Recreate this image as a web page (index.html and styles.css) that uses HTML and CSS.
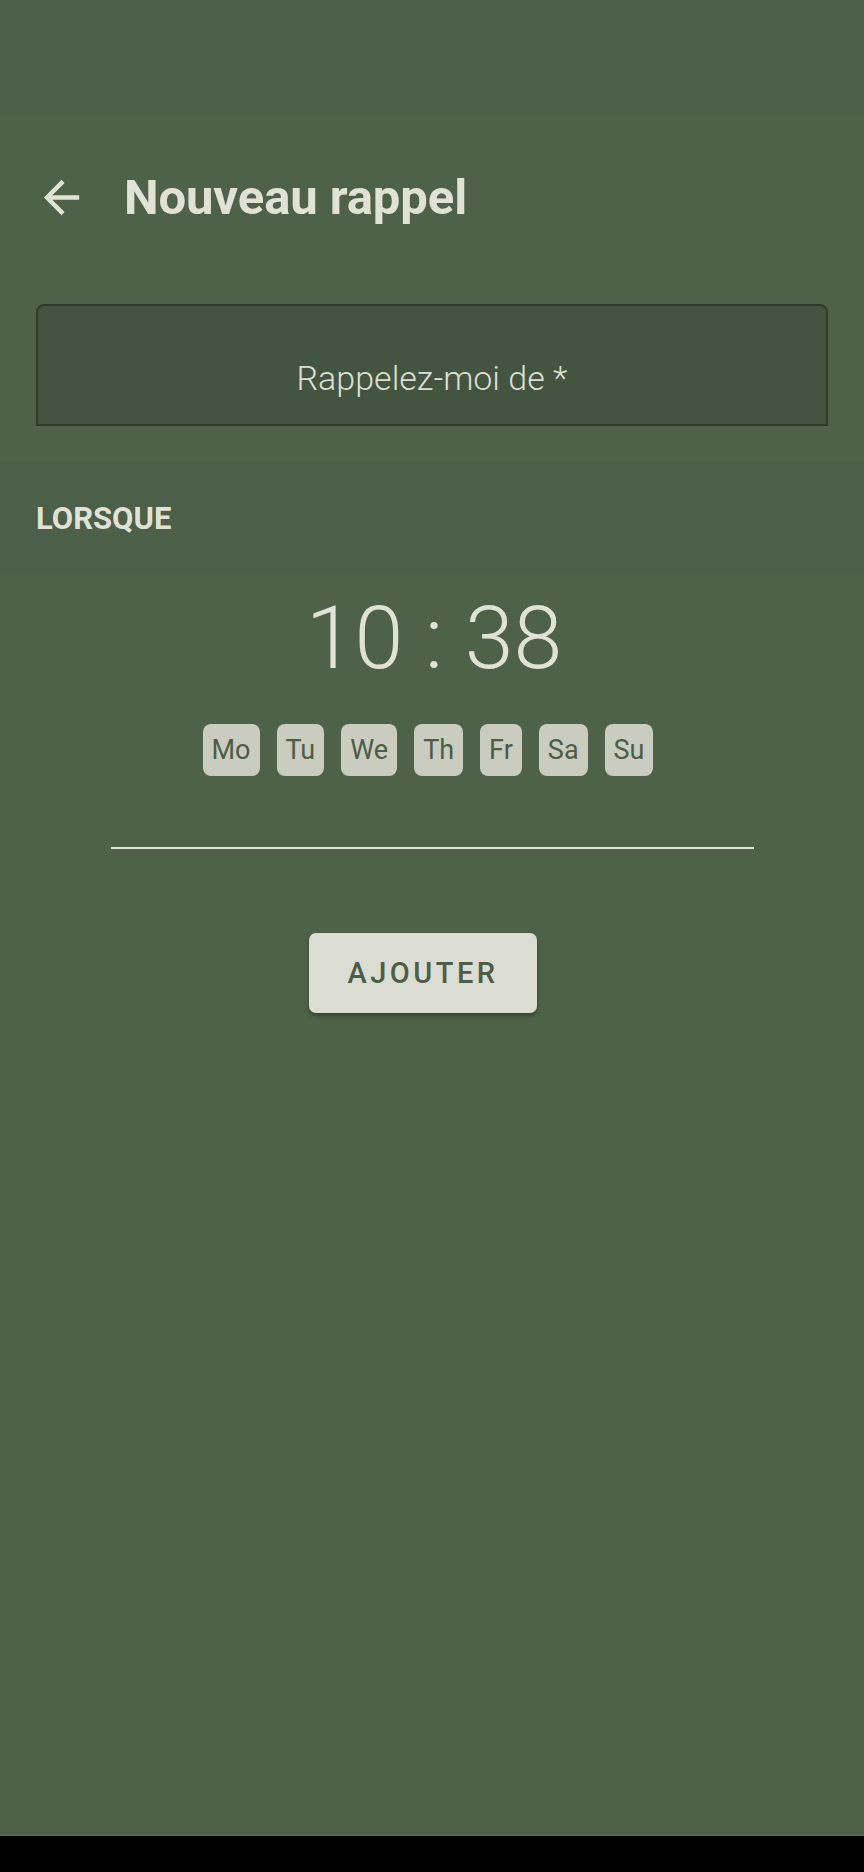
FILE: index.html
```html
<!DOCTYPE html>
<html lang="fr">
<head>
<meta charset="utf-8">
<title>Nouveau rappel</title>
<link rel="stylesheet" href="styles.css">
</head>
<body>
<div class="screen">
  <div class="status"></div>
  <header class="appbar">
    <svg class="back" viewBox="0 0 24 24" aria-hidden="true"><path d="M20 11H7.83l5.59-5.59L12 4l-8 8 8 8 1.41-1.41L7.83 13H20v-2z"/></svg>
    <h1 class="title">Nouveau rappel</h1>
  </header>
  <div class="field-wrap">
    <div class="field"><span class="placeholder">Rappelez-moi de *</span></div>
  </div>
  <div class="section-band"><span class="section-label">LORSQUE</span></div>
  <div class="when">
    <div class="time">10 : 38</div>
    <div class="days">
      <span class="day">Mo</span>
      <span class="day">Tu</span>
      <span class="day">We</span>
      <span class="day">Th</span>
      <span class="day">Fr</span>
      <span class="day">Sa</span>
      <span class="day">Su</span>
    </div>
    <div class="rule"></div>
    <button class="add">AJOUTER</button>
  </div>
  <div class="spacer"></div>
  <div class="navbar"></div>
</div>
</body>
</html>
```

FILE: styles.css
```css
* { box-sizing: border-box; }
html, body { margin: 0; padding: 0; }
body {
  background: #4e6249;
  font-family: Roboto, "Noto Sans", sans-serif;
  color: #e1e2d6;
}
.screen {
  width: 864px;
  height: 1872px;
  display: flex;
  flex-direction: column;
}
.status {
  height: 115px;
  background: #4c5f48;
  flex: none;
}
.appbar {
  display: flex;
  align-items: center;
  height: 164px;
  padding-left: 35px;
  flex: none;
}
.back {
  width: 53px;
  height: 53px;
  fill: #e1e2d6;
  flex: none;
}
.title {
  margin: 0 0 0 36px;
  font-size: 49px;
  font-weight: 700;
  color: #e1e2d6;
  letter-spacing: -0.1px;
}
.field-wrap {
  padding: 25px 36px 0 36px;
  flex: none;
}
.field {
  height: 122px;
  background: #435541;
  border: 2px solid #2b3d29;
  border-radius: 8px 8px 0 0;
  display: flex;
  align-items: flex-end;
  justify-content: center;
  padding-bottom: 26px;
}
.placeholder {
  font-size: 34px;
  font-weight: 300;
  color: #dcdfd2;
}
.section-band {
  margin-top: 37px;
  height: 110px;
  background: #4c5f48;
  display: flex;
  align-items: center;
  padding-left: 36px;
  flex: none;
}
.section-label {
  font-size: 31px;
  font-weight: 700;
  color: #e1e2d6;
}
.when {
  display: flex;
  flex-direction: column;
  align-items: center;
  flex: none;
}
.time {
  margin-top: 12px;
  font-size: 88px;
  font-weight: 300;
  line-height: 106px;
  color: #e1e2d6;
  padding-left: 4px;
}
.days {
  margin-top: 33px;
  margin-right: 8px;
  display: flex;
  gap: 17px;
}
.day {
  height: 52px;
  padding: 0 9px;
  border-radius: 8px;
  background: #c9ccbf;
  color: #4c5d48;
  font-size: 27px;
  line-height: 52px;
}
.rule {
  margin-top: 71px;
  width: 643px;
  height: 2px;
  background: #e1e2d6;
}
.add {
  margin-top: 84px;
  margin-left: -18px;
  width: 228px;
  height: 80px;
  border: none;
  border-radius: 7px;
  background: #dcddd2;
  color: #4b5e47;
  font-family: Roboto, "Noto Sans", sans-serif;
  font-size: 29px;
  font-weight: 500;
  letter-spacing: 3.5px;
  box-shadow: 0 3px 4px rgba(0,0,0,0.3);
}
.spacer { flex: 1; }
.navbar {
  height: 38px;
  background: #000;
  border-top: 2px solid #5a6758;
  flex: none;
}
```
